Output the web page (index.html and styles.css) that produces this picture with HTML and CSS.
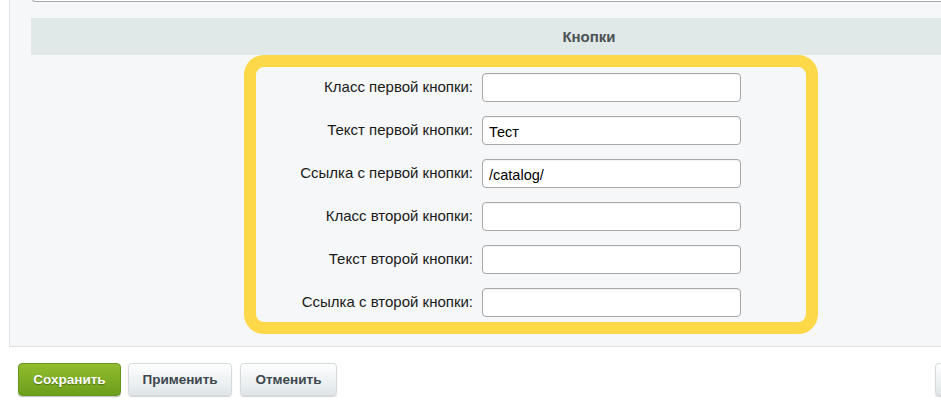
FILE: index.html
```html
<!DOCTYPE html>
<html lang="ru">
<head>
<meta charset="utf-8">
<title>Кнопки</title>
<link rel="stylesheet" href="styles.css">
</head>
<body>
<div class="panel">
  <div class="prev-field"></div>
  <div class="section-head">Кнопки</div>
  <div class="highlight">
    <div class="row"><label class="lbl">Класс первой кнопки:</label><input class="field" type="text" value=""></div>
    <div class="row"><label class="lbl">Текст первой кнопки:</label><input class="field" type="text" value="Тест"></div>
    <div class="row"><label class="lbl">Ссылка с первой кнопки:</label><input class="field" type="text" value="/catalog/"></div>
    <div class="row"><label class="lbl">Класс второй кнопки:</label><input class="field" type="text" value=""></div>
    <div class="row"><label class="lbl">Текст второй кнопки:</label><input class="field" type="text" value=""></div>
    <div class="row"><label class="lbl">Ссылка с второй кнопки:</label><input class="field" type="text" value=""></div>
  </div>
</div>
<div class="actions">
  <button class="btn btn-save">Сохранить</button>
  <button class="btn btn-gray">Применить</button>
  <button class="btn btn-gray">Отменить</button>
  <span class="spacer"></span>
  <button class="btn btn-gray btn-edge"></button>
</div>
</body>
</html>
```

FILE: styles.css
```css
* { box-sizing: border-box; }
html, body { margin: 0; padding: 0; background: #ffffff; }
body {
  width: 941px;
  height: 401px;
  overflow: hidden;
  font-family: "Liberation Sans", Arial, sans-serif;
  font-size: 13px;
  color: #000;
}
.panel {
  margin-left: 9px;
  background: #f5f7f8;
  border-left: 1px solid #e3e6e7;
  border-bottom: 1px solid #dde1e2;
  padding-bottom: 12px;
}
.prev-field {
  margin-left: 22px;
  height: 3px;
  border-left: 1px solid #a9a9a9;
  border-bottom: 1px solid #a9a9a9;
  border-bottom-left-radius: 5px;
  background: #fff;
  margin-top: -1px;
}
.section-head {
  margin-top: 16px;
  margin-left: 21px;
  height: 37px;
  line-height: 37px;
  background: #e0e8e8;
  padding-left: 206px;
  text-align: center;
  font-weight: bold;
  color: #4c5254;
  font-size: 15px;
}
.highlight {
  margin-left: 234px;
  width: 574px;
  border: 12px solid #fdd94a;
  border-radius: 20px;
  padding: 6px 0 5px 0;
  display: flex;
  flex-direction: column;
  gap: 14px;
}
.row {
  display: grid;
  grid-template-columns: 217px 259px;
  column-gap: 9px;
  align-items: center;
}
.lbl {
  text-align: right;
  color: #1a1a1a;
  font-size: 15px;
  padding-bottom: 3px;
  white-space: nowrap;
}
.field {
  width: 259px;
  height: 29px;
  border: 1px solid #a7a7a7;
  border-radius: 4px;
  background: #fff;
  padding: 2px 6px 0;
  font-family: "Liberation Sans", Arial, sans-serif;
  font-size: 14.5px;
  color: #000;
  box-shadow: inset 0 1px 1px rgba(0,0,0,0.05);
  outline: none;
}
.actions {
  display: flex;
  align-items: flex-start;
  padding: 16px 0 0 18px;
  gap: 7px;
}
.btn {
  height: 33px;
  border-radius: 4px;
  font-family: "Liberation Sans", Arial, sans-serif;
  font-size: 13.5px;
  font-weight: bold;
  padding: 0;
  cursor: pointer;
}
.btn-save {
  width: 103px;
  color: #fff;
  border: 1px solid #6b9420;
  background: linear-gradient(#91bd2e, #6c9e1c);
  text-shadow: 0 1px 1px rgba(0,0,0,0.35);
  box-shadow: 0 1px 1px rgba(0,0,0,0.25);
}
.btn-gray {
  width: 104px;
  color: #3d474e;
  border: 1px solid #d5dadc;
  background: linear-gradient(#ffffff, #dfe6e8);
  box-shadow: 0 1px 1px rgba(0,0,0,0.18);
}
.btn-gray + .btn-gray { width: 97px; margin-left: 1px; }
.spacer { flex: 1; }
.btn-edge { width: 20px; margin-right: -14px; }
```
